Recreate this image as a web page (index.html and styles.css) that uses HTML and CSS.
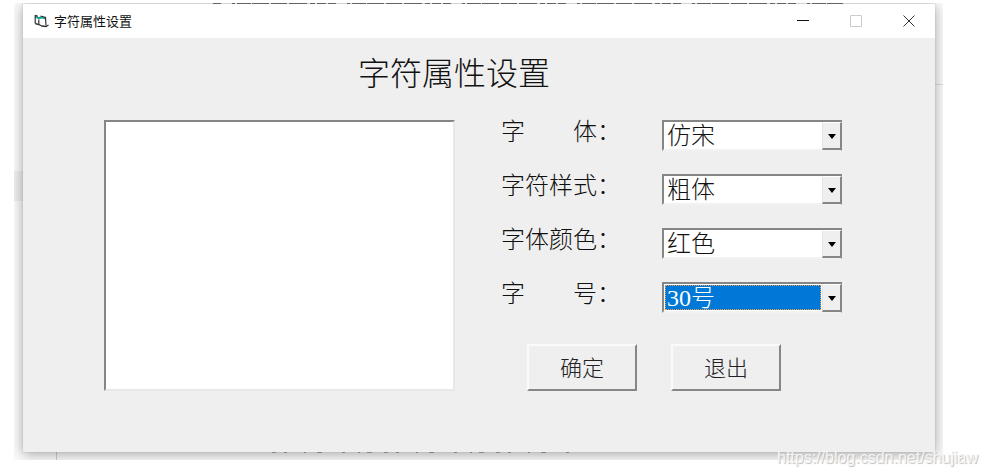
FILE: index.html
```html
<!DOCTYPE html>
<html lang="zh-CN">
<head>
<meta charset="utf-8">
<title>字符属性设置</title>
<link rel="stylesheet" href="styles.css">
</head>
<body>
<div class="desktop">
  <svg class="sliver sliver-top" width="630" height="1" aria-hidden="true"><path d="M0 .5H630" stroke="#62626a" stroke-dasharray="8 11 3 2 14 1 17 2 16 2 18 3 5 2 9 2"/></svg>
  <main class="window">
    <header class="titlebar">
      <svg class="app-icon" width="16" height="14" viewBox="0 0 16 14" aria-hidden="true">
        <path d="M1 1.500 4 3 7.500 2.500 11.500 4.500 12 12 5.500 11.500 1.500 9.500z" fill="#fff"/>
        <path d="M1 1.500 4.500 3 7.500 2.200 11.800 3.800v1.800L8 4.400 4.500 5.200 1.500 3.800z" fill="#17a79b"/>
        <path d="M1.200 1v8.500M1 1.200 4 2.300M6.500 2 11.500 3.500 12 11.500M4.800 5.500v5" fill="none" stroke="#333" stroke-width="1.200"/>
        <path d="M1.200 9.500 4.800 10.500 8 12 12 12.500 14.500 11" fill="none" stroke="#333" stroke-width="1.300"/>
      </svg>
      <span class="caption">字符属性设置</span>
      <button class="window-button" type="button" aria-label="最小化"><svg width="12" height="12"><path d="M0 5.500h12" stroke="#111"/></svg></button>
      <button class="window-button" type="button" aria-label="最大化" disabled><svg width="12" height="12"><path d="M.5.5h11v11H.5z" fill="none" stroke="#ccc"/></svg></button>
      <button class="window-button" type="button" aria-label="关闭"><svg width="12" height="12"><path d="M.5.5l11 11M11.500.5l-11 11" stroke="#333"/></svg></button>
    </header>
    <form class="client">
      <h1 class="heading">字符属性设置</h1>
      <div class="content">
        <textarea class="preview" aria-label="预览"></textarea>
        <div class="settings">
          <div class="field"><label for="font">字　　体：</label><span class="combo"><select id="font"><option>仿宋</option></select></span></div>
          <div class="field"><label for="style">字符样式：</label><span class="combo"><select id="style"><option>粗体</option></select></span></div>
          <div class="field"><label for="color">字体颜色：</label><span class="combo"><select id="color"><option>红色</option></select></span></div>
          <div class="field"><label for="size">字　　号：</label><span class="combo combo-active"><select id="size"><option>30号</option></select><span class="focus-ring"></span></span></div>
          <div class="actions">
            <button class="action" type="button">确定</button>
            <button class="action" type="button">退出</button>
          </div>
        </div>
      </div>
    </form>
  </main>
  <svg class="sliver sliver-bottom" width="298" height="1" aria-hidden="true"><path d="M0 .5H298" stroke="#85858a" stroke-dasharray="4 8 3 17 2 11 5 20 3 13 2 7 5 12"/></svg>
</div>
<div class="watermark">https://blog.csdn.net/shujiaw</div>
</body>
</html>
```
FILE: styles.css
```css
*,
*::before,
*::after {
  box-sizing: border-box;
}

body {
  margin: 0;
  padding: 3px 45px 16px 14px;
  background: #fff;
  color: #111;
  font-family: "Liberation Sans", "Noto Sans CJK SC", sans-serif;
}

.desktop {
  position: relative;
  overflow: hidden;
  padding: 1px 8px 8px 9px;
  background:
    linear-gradient(#eee, #eee) 0 168px / 9px 30px no-repeat,
    linear-gradient(#ddd, #ddd) 100% 81px / 8px 1px no-repeat,
    linear-gradient(#ccc, #ccc) 42px 100% / 1px 8px no-repeat,
    #fafafa;
}

.sliver {
  position: absolute;
  display: block;
}

.sliver-top {
  top: 0;
  left: 199px;
}

.sliver-bottom {
  bottom: 7px;
  left: 258px;
}

.window {
  background: #efefef;
  box-shadow: 0 0 1px #aaa, 0 2px 12px rgba(0, 0, 0, 0.35);
}

.titlebar {
  display: flex;
  align-items: center;
  height: 34px;
  padding-left: 11px;
  background: #fff;
}

.caption {
  flex: 1;
  margin-left: 4px;
  font-family: "Noto Sans CJK SC", sans-serif;
  font-size: 13px;
  line-height: 20px;
}

.app-icon {
  display: block;
}

.window-button {
  display: grid;
  place-items: center;
  width: 53px;
  height: 34px;
  padding: 0;
  border: 0;
  background: none;
}

.client {
  padding: 13px 93px 61px 81px;
  font-family: "Noto Sans CJK SC", sans-serif;
  font-weight: 300;
}

.heading {
  margin: 0 50px 29px 12px;
  font-size: 32px;
  font-weight: 300;
  line-height: 40px;
  text-align: center;
}

.content {
  display: flex;
  gap: 46px;
}

.preview {
  flex: 1;
  min-width: 0;
  resize: none;
  border: 2px solid;
  border-color: #868686 #e8e8e8 #e8e8e8 #868686;
  background: #fff;
  outline: 0;
}

.settings {
  width: 341px;
}

.field {
  display: flex;
  justify-content: space-between;
  height: 54px;
  font-size: 24px;
  line-height: 20px;
}

.combo {
  position: relative;
  width: 180px;
  height: 31px;
}

.combo select {
  appearance: none;
  width: 100%;
  height: 100%;
  padding: 0 20px 0 3px;
  border: 2px solid;
  border-color: #868686 #868686 #f2f2f2 #868686;
  border-radius: 0;
  outline: 0;
  background: #fff;
  color: #111;
  font-family: "Liberation Serif", "Noto Sans CJK SC", serif;
  font-size: 24px;
  font-weight: 300;
}

.combo::before {
  content: "";
  position: absolute;
  top: 2px;
  right: 0;
  bottom: 1px;
  width: 20px;
  border: solid;
  border-width: 1px 2px 2px 1px;
  border-color: #fff #868686 #868686 #e4e4e4;
  background: #efefef;
  pointer-events: none;
}

.combo::after {
  content: "";
  position: absolute;
  top: 14px;
  right: 6px;
  border: solid transparent;
  border-width: 5px 4px 0;
  border-top-color: #000;
  pointer-events: none;
}

.combo-active select {
  color: #fff;
  background: #fff linear-gradient(#0078d7, #0078d7) 1px 1px / 156px 25px no-repeat;
}

.focus-ring {
  position: absolute;
  inset: 3px 21px 3px 3px;
  border: 1px dotted #f09a50;
  pointer-events: none;
}

.actions {
  display: flex;
  gap: 34px;
  padding: 8px 0 0 26px;
}

.action {
  width: 110px;
  height: 47px;
  padding: 0 0 4px;
  border: 2px solid;
  border-color: #fafafa #868686 #868686 #fafafa;
  background: #efefef;
  color: #222;
  font-family: inherit;
  font-size: 22px;
  font-weight: 300;
}

.watermark {
  position: absolute;
  right: 10px;
  bottom: 9px;
  color: #f6f6f6;
  font-size: 16px;
  line-height: 18px;
  text-shadow: 1px 1px 1px #bbb;
}
```
